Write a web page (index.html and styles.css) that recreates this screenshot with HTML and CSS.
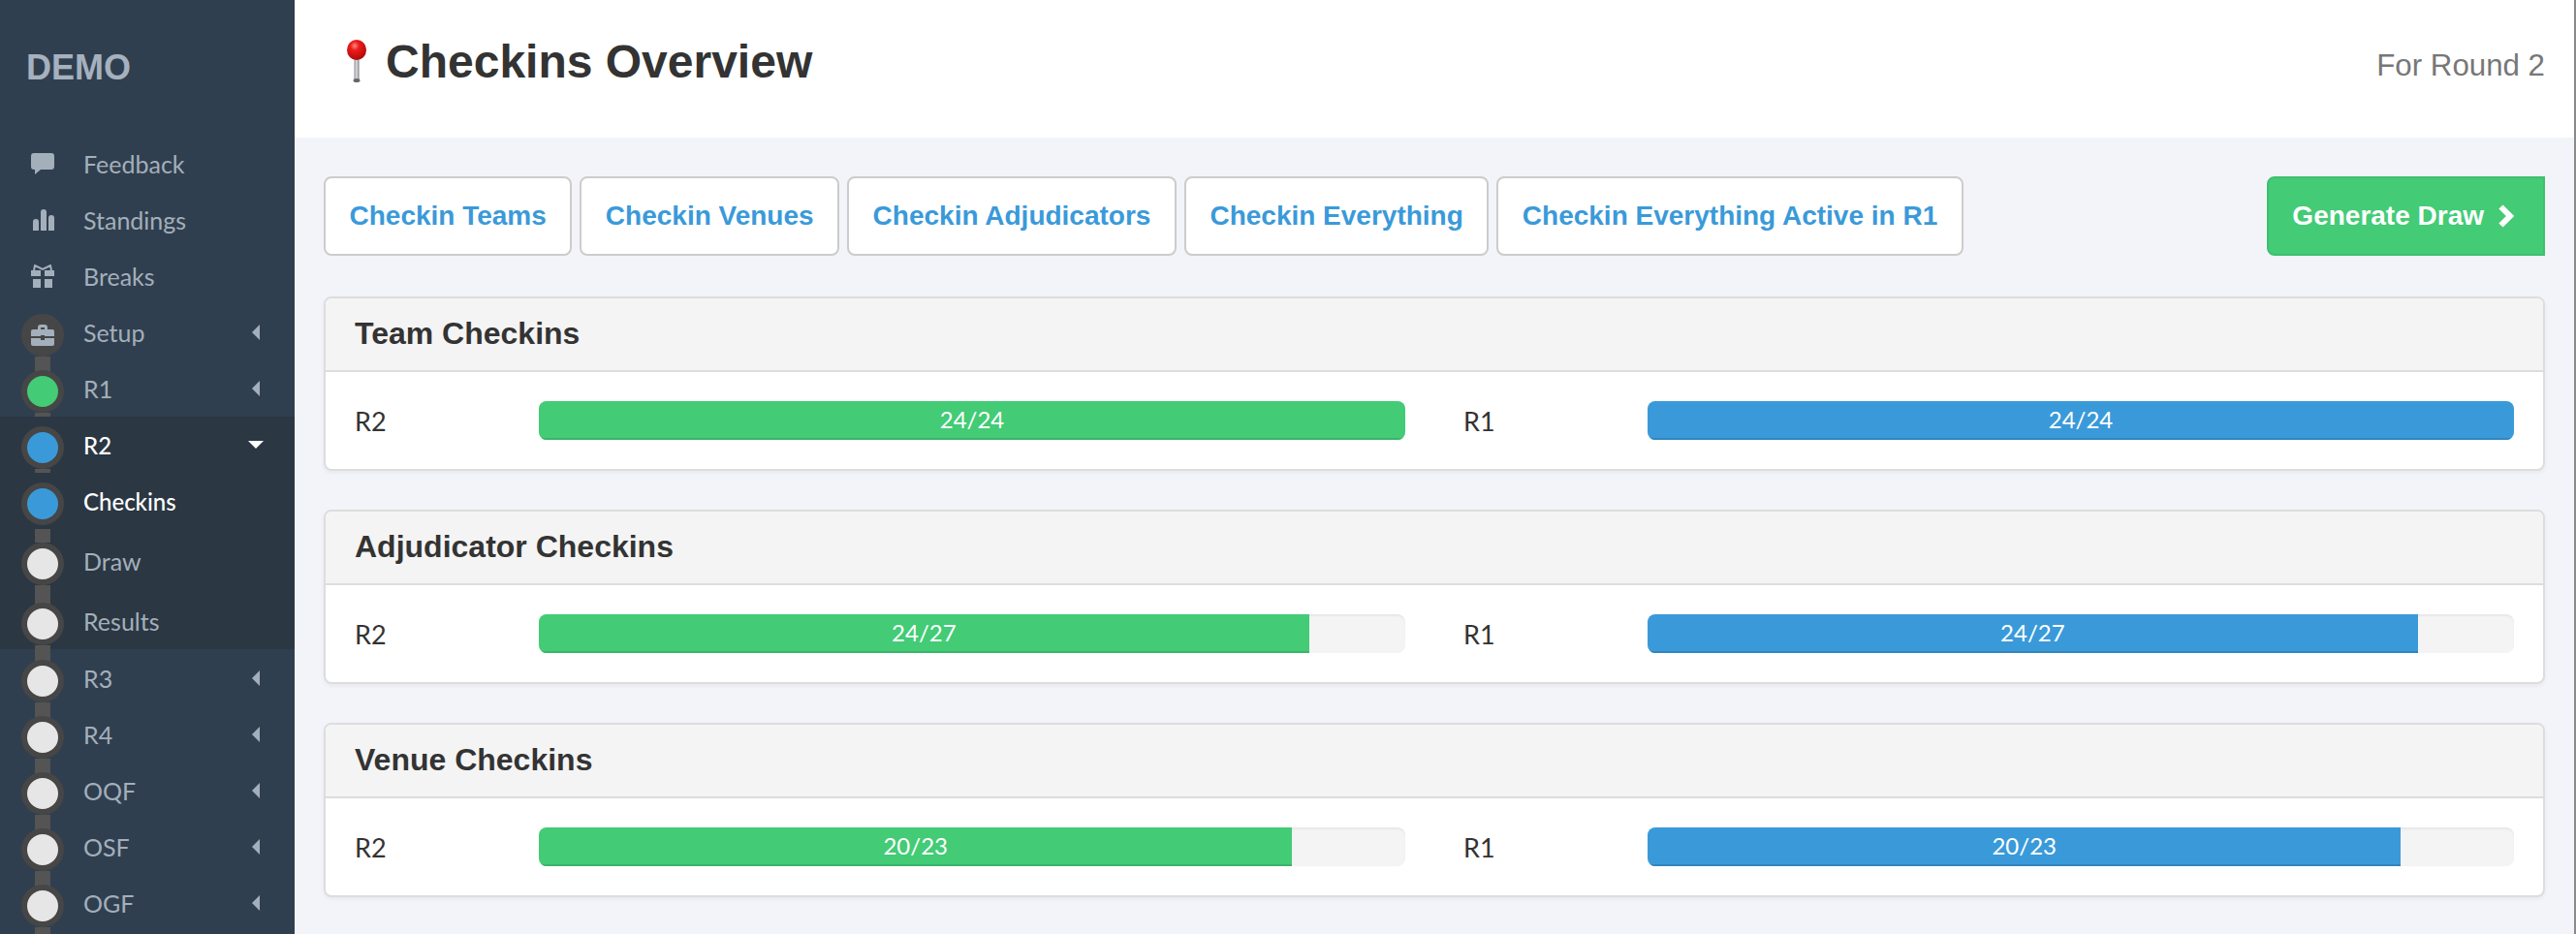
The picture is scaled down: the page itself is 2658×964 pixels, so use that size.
FILE: index.html
```html
<!DOCTYPE html>
<html lang="en">
<head>
    <meta charset="UTF-8">
    <title>Checkins Overview</title>
    <link rel="stylesheet" href="styles.css">
</head>
<body>
    <aside class="sidebar">
        <div class="logo">DEMO</div>
        <ul class="nav">
            <li class="nav-row">
                <span class="nav-icon">
                    <svg width="24" height="22" viewBox="0 0 24 22"><path d="M3 0h18a3 3 0 0 1 3 3v11a3 3 0 0 1-3 3H10l-6 5v-5H3a3 3 0 0 1-3-3V3a3 3 0 0 1 3-3z"/></svg>
                </span>
                <span class="nav-label">Feedback</span>
            </li>
            <li class="nav-row">
                <span class="nav-icon">
                    <svg width="24" height="22" viewBox="0 0 24 22"><path d="M2 13a3 3 0 0 1 6 0v9H2zM10 3a3 3 0 0 1 6 0v19h-6zM18 9a3 3 0 0 1 6 0v13h-6z"/></svg>
                </span>
                <span class="nav-label">Standings</span>
            </li>
            <li class="nav-row">
                <span class="nav-icon">
                    <svg width="24" height="24" viewBox="0 0 24 24"><path d="M0 6h10v6H0zM14 6h10v6H14zM2 15h8v9H2zM14 15h8v9h-8z"/><path class="gift-bow" d="M3 6l1-5 8 4 8-4 1 5"/></svg>
                </span>
                <span class="nav-label">Breaks</span>
            </li>
            <li class="nav-row has-caret">
                <span class="dot dot-icon">
                    <svg width="24" height="22" viewBox="0 0 24 22"><path d="M7 5V3a3 3 0 0 1 3-3h4a3 3 0 0 1 3 3v2h5a2 2 0 0 1 2 2v5H14v-1h-4v1H0V7a2 2 0 0 1 2-2zm3-2v2h4V3zM0 14h10v2h4v-2h10v6a2 2 0 0 1-2 2H2a2 2 0 0 1-2-2z"/></svg>
                </span>
                <span class="nav-label">Setup</span>
                <span class="caret-left"></span>
            </li>
            <li class="nav-row has-caret">
                <span class="dot dot-green"></span>
                <span class="nav-label">R1</span>
                <span class="caret-left"></span>
            </li>
            <li class="nav-group">
                <div class="nav-row has-caret active">
                    <span class="dot dot-blue dot-short"></span>
                    <span class="nav-label">R2</span>
                    <span class="caret-down"></span>
                </div>
                <ul class="subnav">
                    <li class="nav-row sub-row active">
                        <span class="dot dot-blue dot-gap"></span>
                        <span class="nav-label">Checkins</span>
                    </li>
                    <li class="nav-row sub-row">
                        <span class="dot"></span>
                        <span class="nav-label">Draw</span>
                    </li>
                    <li class="nav-row sub-row">
                        <span class="dot"></span>
                        <span class="nav-label">Results</span>
                    </li>
                </ul>
            </li>
            <li class="nav-row has-caret">
                <span class="dot"></span>
                <span class="nav-label">R3</span>
                <span class="caret-left"></span>
            </li>
            <li class="nav-row has-caret">
                <span class="dot"></span>
                <span class="nav-label">R4</span>
                <span class="caret-left"></span>
            </li>
            <li class="nav-row has-caret">
                <span class="dot"></span>
                <span class="nav-label">OQF</span>
                <span class="caret-left"></span>
            </li>
            <li class="nav-row has-caret">
                <span class="dot"></span>
                <span class="nav-label">OSF</span>
                <span class="caret-left"></span>
            </li>
            <li class="nav-row has-caret">
                <span class="dot"></span>
                <span class="nav-label">OGF</span>
                <span class="caret-left"></span>
            </li>
        </ul>
    </aside>

    <div class="page">
        <header class="page-header">
            <h1 class="page-title">
                <svg class="pin" width="20" height="44" viewBox="0 0 20 44">
                    <defs>
                        <radialGradient id="ball" cx="0.4" cy="0.3" r="0.75">
                            <stop offset="0" stop-color="#ff8a80"/>
                            <stop offset="0.3" stop-color="#ee1c1c"/>
                            <stop offset="1" stop-color="#a80808"/>
                        </radialGradient>
                        <linearGradient id="stem" x1="0" x2="1" y1="0" y2="0">
                            <stop offset="0" stop-color="#8d8d92"/>
                            <stop offset="0.5" stop-color="#e2e2e6"/>
                            <stop offset="1" stop-color="#77777c"/>
                        </linearGradient>
                    </defs>
                    <rect x="7.5" y="18" width="5" height="24" fill="url(#stem)"/>
                    <ellipse cx="10" cy="42" rx="3.5" ry="2" fill="#66666a"/>
                    <ellipse cx="10" cy="10.5" rx="10" ry="10.5" fill="url(#ball)"/>
                </svg>
                Checkins Overview
            </h1>
            <div class="page-sub">For Round 2</div>
        </header>

        <main class="content">
            <div class="toolbar">
                <a class="btn">Checkin Teams</a>
                <a class="btn">Checkin Venues</a>
                <a class="btn">Checkin Adjudicators</a>
                <a class="btn">Checkin Everything</a>
                <a class="btn">Checkin Everything Active in R1</a>
                <a class="btn btn-primary">
                    Generate Draw
                    <svg width="18" height="24" viewBox="0 0 18 24"><path d="M2.5 2.5L12 12l-9.5 9.5" fill="none" stroke="#fff" stroke-width="6"/></svg>
                </a>
            </div>

            <section class="panel">
                <h2 class="panel-title">Team Checkins</h2>
                <div class="panel-body">
                    <div class="stat">
                        <span class="stat-label">R2</span>
                        <div class="bar"><div class="fill fill-green" style="width: 100%">24/24</div></div>
                    </div>
                    <div class="stat">
                        <span class="stat-label">R1</span>
                        <div class="bar"><div class="fill fill-blue" style="width: 100%">24/24</div></div>
                    </div>
                </div>
            </section>

            <section class="panel">
                <h2 class="panel-title">Adjudicator Checkins</h2>
                <div class="panel-body">
                    <div class="stat">
                        <span class="stat-label">R2</span>
                        <div class="bar"><div class="fill fill-green" style="width: 88.89%">24/27</div></div>
                    </div>
                    <div class="stat">
                        <span class="stat-label">R1</span>
                        <div class="bar"><div class="fill fill-blue" style="width: 88.89%">24/27</div></div>
                    </div>
                </div>
            </section>

            <section class="panel">
                <h2 class="panel-title">Venue Checkins</h2>
                <div class="panel-body">
                    <div class="stat">
                        <span class="stat-label">R2</span>
                        <div class="bar"><div class="fill fill-green" style="width: 86.96%">20/23</div></div>
                    </div>
                    <div class="stat">
                        <span class="stat-label">R1</span>
                        <div class="bar"><div class="fill fill-blue" style="width: 86.96%">20/23</div></div>
                    </div>
                </div>
            </section>
        </main>
    </div>
</body>
</html>
```

FILE: styles.css
```css
html, body {
    height: 964px;
    overflow: hidden;
}
body {
    margin: 0;
    display: flex;
    font-family: "Liberation Sans", Arial, sans-serif;
    color: #333333;
    background-color: #f2f4f9;
}
ul {
    list-style: none;
    margin: 0;
    padding: 0;
}

/* sidebar */
.sidebar {
    width: 304px;
    flex: none;
    height: 964px;
    overflow: hidden;
    background-color: #303f4f;
    font-family: Lato, "Liberation Sans", sans-serif;
    color: #a3afbb;
}
.logo {
    height: 140px;
    padding-left: 27px;
    display: flex;
    align-items: center;
    font-family: "Liberation Sans", Arial, sans-serif;
    font-size: 36px;
    font-weight: bold;
    color: #a5b1be;
}
.nav-row {
    height: 58px;
    padding: 0 36px 0 22px;
    display: flex;
    align-items: center;
    gap: 20px;
    font-size: 25px;
}
.nav-label {
    flex: 1;
}
.nav-row.active {
    color: #ffffff;
    font-size: 24px;
    font-weight: 500;
}
.nav-icon {
    width: 44px;
    display: flex;
    justify-content: center;
}
.nav-icon svg, .dot-icon svg {
    fill: #a3afbb;
}
.gift-bow {
    fill: none;
    stroke: #a3afbb;
    stroke-width: 2;
}
.nav-group {
    position: relative;
    height: 240px;
    margin-bottom: 1px;
    background-color: #2b3743;
}
.subnav {
    margin-top: -2px;
}
.sub-row {
    height: 62px;
}

/* round timeline */
.dot {
    position: relative;
    flex: none;
    box-sizing: border-box;
    width: 44px;
    height: 44px;
    margin-top: 6px;
    border: 6px solid #464646;
    border-radius: 50%;
    background-color: #e6e6e6;
}
.dot::after {
    content: "";
    position: absolute;
    top: calc(100% + 6px);
    left: 8px;
    width: 16px;
    height: 20px;
    background-color: #545454;
}
.dot-icon {
    display: flex;
    align-items: center;
    justify-content: center;
    background-color: #464646;
}
.dot-green {
    background-color: #43cb76;
}
.dot-blue {
    background-color: #3a9ad9;
}
.dot-short::after {
    height: 4px;
}
.dot-gap::after {
    top: calc(100% + 10px);
    height: 14px;
}
.caret-left {
    width: 0;
    height: 0;
    border-top: 8px solid transparent;
    border-bottom: 8px solid transparent;
    border-right: 8px solid #a3afbb;
}
.caret-down {
    width: 0;
    height: 0;
    margin-right: -4px;
    border-left: 8px solid transparent;
    border-right: 8px solid transparent;
    border-top: 8px solid #ffffff;
}

/* main area */
.page {
    flex: 1;
    border-right: 2px solid #8a8a8a;
}
.page-header {
    height: 142px;
    box-sizing: border-box;
    padding: 0 30px 0 54px;
    display: flex;
    align-items: center;
    justify-content: space-between;
    background-color: #ffffff;
}
.page-title {
    margin: 0 0 14px;
    display: flex;
    align-items: center;
    gap: 20px;
    font-size: 48px;
    line-height: 56px;
}
.pin {
    margin-top: -2px;
}
.page-sub {
    margin-bottom: 7px;
    font-size: 31.25px;
    color: #777777;
}
.content {
    padding: 40px 30px 0;
}
.toolbar {
    display: flex;
    gap: 8px;
    margin-bottom: 42px;
}
.btn {
    height: 82px;
    box-sizing: border-box;
    padding: 0 24.5px;
    display: flex;
    align-items: center;
    border: 2px solid #cccccc;
    border-radius: 8px;
    background-color: #ffffff;
    font-size: 28px;
    font-weight: bold;
    color: #3a9ad9;
}
.btn-primary {
    margin-left: auto;
    padding: 0 28px 0 24px;
    gap: 15px;
    border-color: #3fbf70;
    border-radius: 8px 0 0 8px;
    background-color: #43cb76;
    color: #ffffff;
}

/* panels */
.panel {
    margin-bottom: 40px;
    border: 2px solid #dddddd;
    border-radius: 8px;
    background-color: #ffffff;
    box-shadow: 0 2px 4px rgba(0, 0, 0, 0.05);
}
.panel-title {
    height: 72px;
    margin: 0;
    padding: 0 30px 2px;
    display: flex;
    align-items: center;
    border-bottom: 2px solid #dddddd;
    border-radius: 6px 6px 0 0;
    background-color: #f4f4f4;
    font-size: 32px;
}
.panel-body {
    padding: 30px;
    display: grid;
    grid-template-columns: 1fr 1fr;
    gap: 60px;
}
.stat {
    display: flex;
    align-items: center;
}
.stat-label {
    width: 190px;
    flex: none;
    font-family: Lato, "Liberation Sans", sans-serif;
    font-size: 27px;
}
.bar {
    flex: 1;
    height: 40px;
    overflow: hidden;
    border-radius: 8px;
    background-color: #f4f4f4;
    box-shadow: inset 0 2px 2px rgba(0, 0, 0, 0.05);
}
.fill {
    height: 40px;
    text-align: center;
    font-family: Lato, "Liberation Sans", sans-serif;
    font-size: 24px;
    line-height: 38px;
    color: #ffffff;
}
.fill-green {
    background-color: #43cb76;
    box-shadow: inset 0 -2px 0 #3bb469;
}
.fill-blue {
    background-color: #3a9ad9;
    box-shadow: inset 0 -2px 0 #3285bc;
}
```
